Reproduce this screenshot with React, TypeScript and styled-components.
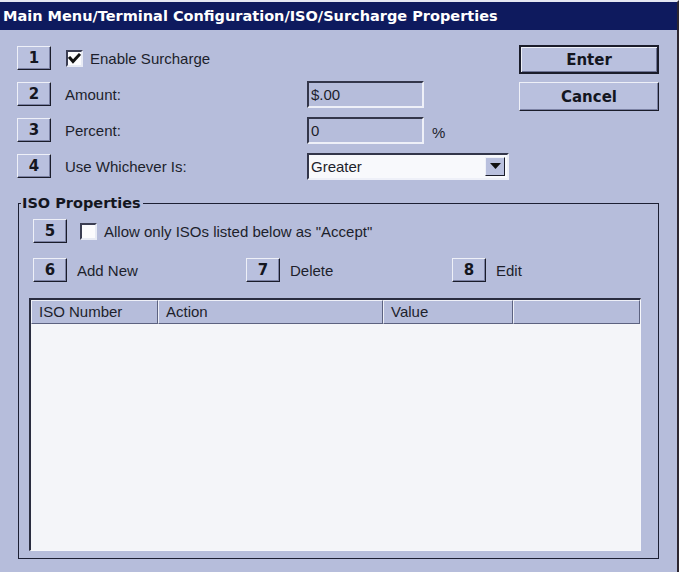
import React from "react";
import styled, { createGlobalStyle } from "styled-components";

const Global = createGlobalStyle`
  html, body { margin: 0; padding: 0; background: #b6bddb; }
  * { box-sizing: border-box; }
  body { font-family: "Liberation Sans", Arial, sans-serif; color: #1d1f2c; }
`;

const boldFont = `"DejaVu Sans", "Liberation Sans", sans-serif`;

const Window = styled.div`
  width: 679px;
  height: 572px;
  background: #b6bddb;
  border-top: 2px solid #e4e7f2;
  border-right: 2px solid #2c2630;
  display: flex;
  flex-direction: column;
  overflow: hidden;
`;

const TitleBar = styled.div`
  height: 28px;
  flex: none;
  background: #0e1a5e;
  color: #ffffff;
  font-family: ${boldFont};
  font-weight: bold;
  font-size: 14.5px;
  line-height: 28px;
  padding-left: 3px;
  white-space: nowrap;
`;

const Content = styled.div`
  padding: 10px 0 0 17px;
  display: flex;
  flex-direction: column;
`;

const TopSection = styled.div`
  display: flex;
`;

const LeftColumn = styled.div`
  width: 502px;
  display: flex;
  flex-direction: column;
`;

const RightColumn = styled.div`
  padding-top: 5px;
  display: flex;
  flex-direction: column;
  gap: 8px;
`;

const Row = styled.div<{ $indent?: number; $gapTop?: number }>`
  height: 36px;
  display: flex;
  align-items: center;
  padding-left: ${(p) => p.$indent ?? 0}px;
  margin-top: ${(p) => p.$gapTop ?? 0}px;
  font-size: 15px;
`;

const KeyButton = styled.div`
  width: 34px;
  height: 24px;
  flex: none;
  display: flex;
  align-items: center;
  justify-content: center;
  background: #b9c0de;
  border: 1px solid;
  border-color: #eef0f8 #1a1c2a #1a1c2a #eef0f8;
  box-shadow: inset -1px -1px 0 #7c82a4;
  font-family: ${boldFont};
  font-weight: bold;
  font-size: 15px;
  color: #14161f;
`;

const CheckWrap = styled.label<{ $offset: number }>`
  display: flex;
  align-items: center;
  gap: 7px;
  margin-left: ${(p) => p.$offset}px;
`;

const CheckBox = styled.span`
  width: 17px;
  height: 17px;
  flex: none;
  background: #fbfbfd;
  border: 2px solid;
  border-color: #3a3d52 #e8ebf5 #e8ebf5 #3a3d52;
  display: flex;
  align-items: center;
  justify-content: center;
`;

const Caption = styled.span`
  margin-left: 14px;
  width: 242px;
  flex: none;
`;

const TextField = styled.div<{ $width: number; $light?: boolean }>`
  width: ${(p) => p.$width}px;
  height: 27px;
  background: ${(p) => (p.$light ? "#f8f9fc" : "#b6bddb")};
  border: 2px solid;
  border-color: #33364a #eef0f8 #eef0f8 #33364a;
  display: flex;
  align-items: center;
  padding-left: 2px;
  font-size: 15px;
`;

const Unit = styled.span`
  margin-left: 8px;
  margin-top: 4px;
`;

const DropButton = styled.div`
  margin-left: auto;
  margin-right: 2px;
  width: 20px;
  height: 19px;
  background: #b9c0de;
  border: 1px solid;
  border-color: #eef0f8 #1a1c2a #1a1c2a #eef0f8;
  display: flex;
  align-items: center;
  justify-content: center;
`;

const ActionButton = styled.div<{ $default?: boolean }>`
  width: 140px;
  height: 29px;
  display: flex;
  align-items: center;
  justify-content: center;
  font-family: ${boldFont};
  font-weight: bold;
  font-size: 15px;
  color: #14161f;
  background: #b9c0de;
  border: ${(p) => (p.$default ? "2px" : "1px")} solid;
  border-color: ${(p) =>
    p.$default ? "#1a1c2a" : "#eef0f8 #1a1c2a #1a1c2a #eef0f8"};
  box-shadow: ${(p) =>
    p.$default
      ? "inset 1px 1px 0 #eef0f8, inset -1px -1px 0 #6e7496"
      : "inset -1px -1px 0 #7c82a4"};
`;

const GroupBox = styled.fieldset`
  margin: 10px 0 0 1px;
  width: 641px;
  border: 1px solid #1c1f33;
  padding: 0 16px 7px 10px;
  min-width: 0;
`;

const GroupLegend = styled.legend`
  margin-left: -8px;
  padding: 0 2px 0 1px;
  font-family: ${boldFont};
  font-weight: bold;
  font-size: 14.5px;
  line-height: 18px;
  color: #14161f;
`;

const CommandRow = styled.div`
  height: 36px;
  margin-top: 3px;
  padding-left: 4px;
  display: grid;
  grid-template-columns: 213px 206px auto;
  align-items: center;
  font-size: 15px;
`;

const Command = styled.div`
  display: flex;
  align-items: center;
  gap: 10px;
`;

const ListView = styled.div`
  margin-top: 10px;
  width: 612px;
  height: 253px;
  background: #f4f5f9;
  border-style: solid;
  border-width: 2px 1px 1px 2px;
  border-color: #2a2d40 #f6f7fb #f6f7fb #2a2d40;
  display: flex;
  flex-direction: column;
`;

const Header = styled.div`
  height: 24px;
  display: flex;
  flex: none;
`;

const HeaderCell = styled.div<{ $width?: number }>`
  ${(p) => (p.$width ? `width: ${p.$width}px; flex: none;` : "flex: 1;")}
  background: #b6bddb;
  border: 1px solid;
  border-color: #eef0f8 #5c6280 #5c6280 #eef0f8;
  font-size: 15px;
  line-height: 22px;
  padding-left: 7px;
  white-space: nowrap;
`;

const Check = () => (
  <svg width="13" height="13" viewBox="0 0 13 13">
    <path
      d="M2 6 L5 9.5 L11 3"
      stroke="#111"
      strokeWidth="3"
      strokeLinecap="square"
      fill="none"
    />
  </svg>
);

const Arrow = () => (
  <svg width="11" height="6" viewBox="0 0 11 6">
    <path d="M0 0 H11 L5.5 6 Z" fill="#111" />
  </svg>
);

const commands = [
  { key: "6", label: "Add New" },
  { key: "7", label: "Delete" },
  { key: "8", label: "Edit" },
];

const columns: { label: string; width?: number }[] = [
  { label: "ISO Number", width: 127 },
  { label: "Action", width: 225 },
  { label: "Value", width: 130 },
  { label: "" },
];

export default function App() {
  return (
    <>
      <Global />
      <Window>
        <TitleBar>Main Menu/Terminal Configuration/ISO/Surcharge Properties</TitleBar>
        <Content>
          <TopSection>
            <LeftColumn>
              <Row>
                <KeyButton>1</KeyButton>
                <CheckWrap $offset={15}>
                  <CheckBox>
                    <Check />
                  </CheckBox>
                  Enable Surcharge
                </CheckWrap>
              </Row>
              <Row>
                <KeyButton>2</KeyButton>
                <Caption>Amount:</Caption>
                <TextField $width={117}>$.00</TextField>
              </Row>
              <Row>
                <KeyButton>3</KeyButton>
                <Caption>Percent:</Caption>
                <TextField $width={117}>0</TextField>
                <Unit>%</Unit>
              </Row>
              <Row>
                <KeyButton>4</KeyButton>
                <Caption>Use Whichever Is:</Caption>
                <TextField $width={202} $light>
                  Greater
                  <DropButton>
                    <Arrow />
                  </DropButton>
                </TextField>
              </Row>
            </LeftColumn>
            <RightColumn>
              <ActionButton $default>Enter</ActionButton>
              <ActionButton>Cancel</ActionButton>
            </RightColumn>
          </TopSection>
          <GroupBox>
            <GroupLegend>ISO Properties</GroupLegend>
            <Row $indent={4} $gapTop={1}>
              <KeyButton>5</KeyButton>
              <CheckWrap $offset={13}>
                <CheckBox />
                Allow only ISOs listed below as "Accept"
              </CheckWrap>
            </Row>
            <CommandRow>
              {commands.map((c) => (
                <Command key={c.key}>
                  <KeyButton>{c.key}</KeyButton>
                  {c.label}
                </Command>
              ))}
            </CommandRow>
            <ListView>
              <Header>
                {columns.map((c, i) => (
                  <HeaderCell key={i} $width={c.width}>
                    {c.label}
                  </HeaderCell>
                ))}
              </Header>
            </ListView>
          </GroupBox>
        </Content>
      </Window>
    </>
  );
}
